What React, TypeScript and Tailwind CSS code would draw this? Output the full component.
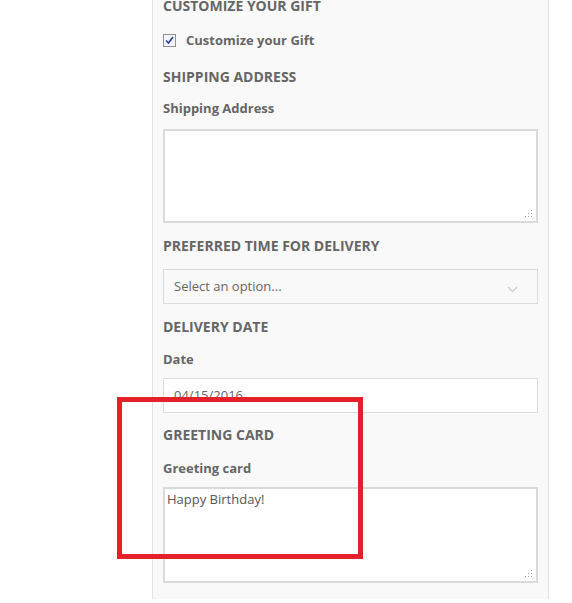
import React from "react";

const Grip = () => (
  <svg className="absolute right-[3px] bottom-[3px]" width="8" height="8" viewBox="0 0 8 8">
    <rect x="6" y="0" width="1" height="1" fill="#a0a0a0" />
    <rect x="6" y="3" width="1" height="1" fill="#a0a0a0" />
    <rect x="3" y="3" width="1" height="1" fill="#a0a0a0" />
    <rect x="6" y="6" width="1" height="1" fill="#a0a0a0" />
    <rect x="3" y="6" width="1" height="1" fill="#a0a0a0" />
    <rect x="0" y="6" width="1" height="1" fill="#a0a0a0" />
  </svg>
);

const Heading = ({ children, className = "" }: { children: React.ReactNode; className?: string }) => (
  <div className={`h-[20px] leading-[20px] text-[14px] font-bold uppercase text-[#666] ${className}`}>{children}</div>
);

const Label = ({ children, className = "" }: { children: React.ReactNode; className?: string }) => (
  <div className={`h-[20px] leading-[20px] text-[13px] font-bold text-[#666] ${className}`}>{children}</div>
);

export default function App() {
  return (
    <div
      className="relative w-[572px] h-[603px] overflow-hidden bg-white"
      style={{ fontFamily: '"Open Sans", "Liberation Sans", sans-serif' }}
    >
      <div className="ml-[152px] w-[397px] h-full border-l border-r border-[#e3e3e3] bg-[#f9f9f9] px-[10px]">
        <Heading className="-mt-[4px]">Customize your Gift</Heading>
        <div className="mt-[14px] flex items-center h-[20px]">
          <div className="w-[13px] h-[13px] border border-[#8e8f99] bg-[#f4f6fb] flex items-center justify-center">
            <svg width="9" height="9" viewBox="0 0 9 9">
              <path d="M1 4.5 L3.5 7 L8 1" fill="none" stroke="#2b3f9b" strokeWidth="1.6" />
            </svg>
          </div>
          <span className="ml-[10px] text-[13px] font-bold text-[#666] leading-[20px]">Customize your Gift</span>
        </div>
        <Heading className="mt-[17px]">Shipping Address</Heading>
        <Label className="mt-[11px]">Shipping Address</Label>
        <div className="relative mt-[11px] h-[94px] border-2 border-[#dadada] bg-white">
          <Grip />
        </div>
        <Heading className="mt-[13px]">Preferred time for delivery</Heading>
        <div className="relative mt-[13px] h-[35px] border border-[#dcdcdc] bg-[#f9f9f9] flex items-center pl-[10px]">
          <span className="text-[13px] text-[#666]">Select an option...</span>
          <svg className="absolute right-[19px] top-[16px]" width="11" height="7" viewBox="0 0 11 7">
            <path d="M1 1 L5.5 5.5 L10 1" fill="none" stroke="#cfcfcf" strokeWidth="1.5" />
          </svg>
        </div>
        <Heading className="mt-[13px]">Delivery Date</Heading>
        <Label className="mt-[12px]">Date</Label>
        <div className="mt-[9px] h-[35px] border border-[#dcdcdc] bg-white flex items-center pl-[10px]">
          <span className="text-[13px] text-[#666]">04/15/2016</span>
        </div>
        <Heading className="mt-[12px]">Greeting card</Heading>
        <Label className="mt-[13px]">Greeting card</Label>
        <div className="relative mt-[9px] h-[96px] border-2 border-[#dadada] bg-white pl-[2px]">
          <div className="text-[13px] text-[#555] leading-[20px]">Happy Birthday!</div>
          <Grip />
        </div>
      </div>
      <div className="absolute left-[117px] top-[397px] w-[246px] h-[162px] border-[5px] border-[#e5202a]" />
    </div>
  );
}
